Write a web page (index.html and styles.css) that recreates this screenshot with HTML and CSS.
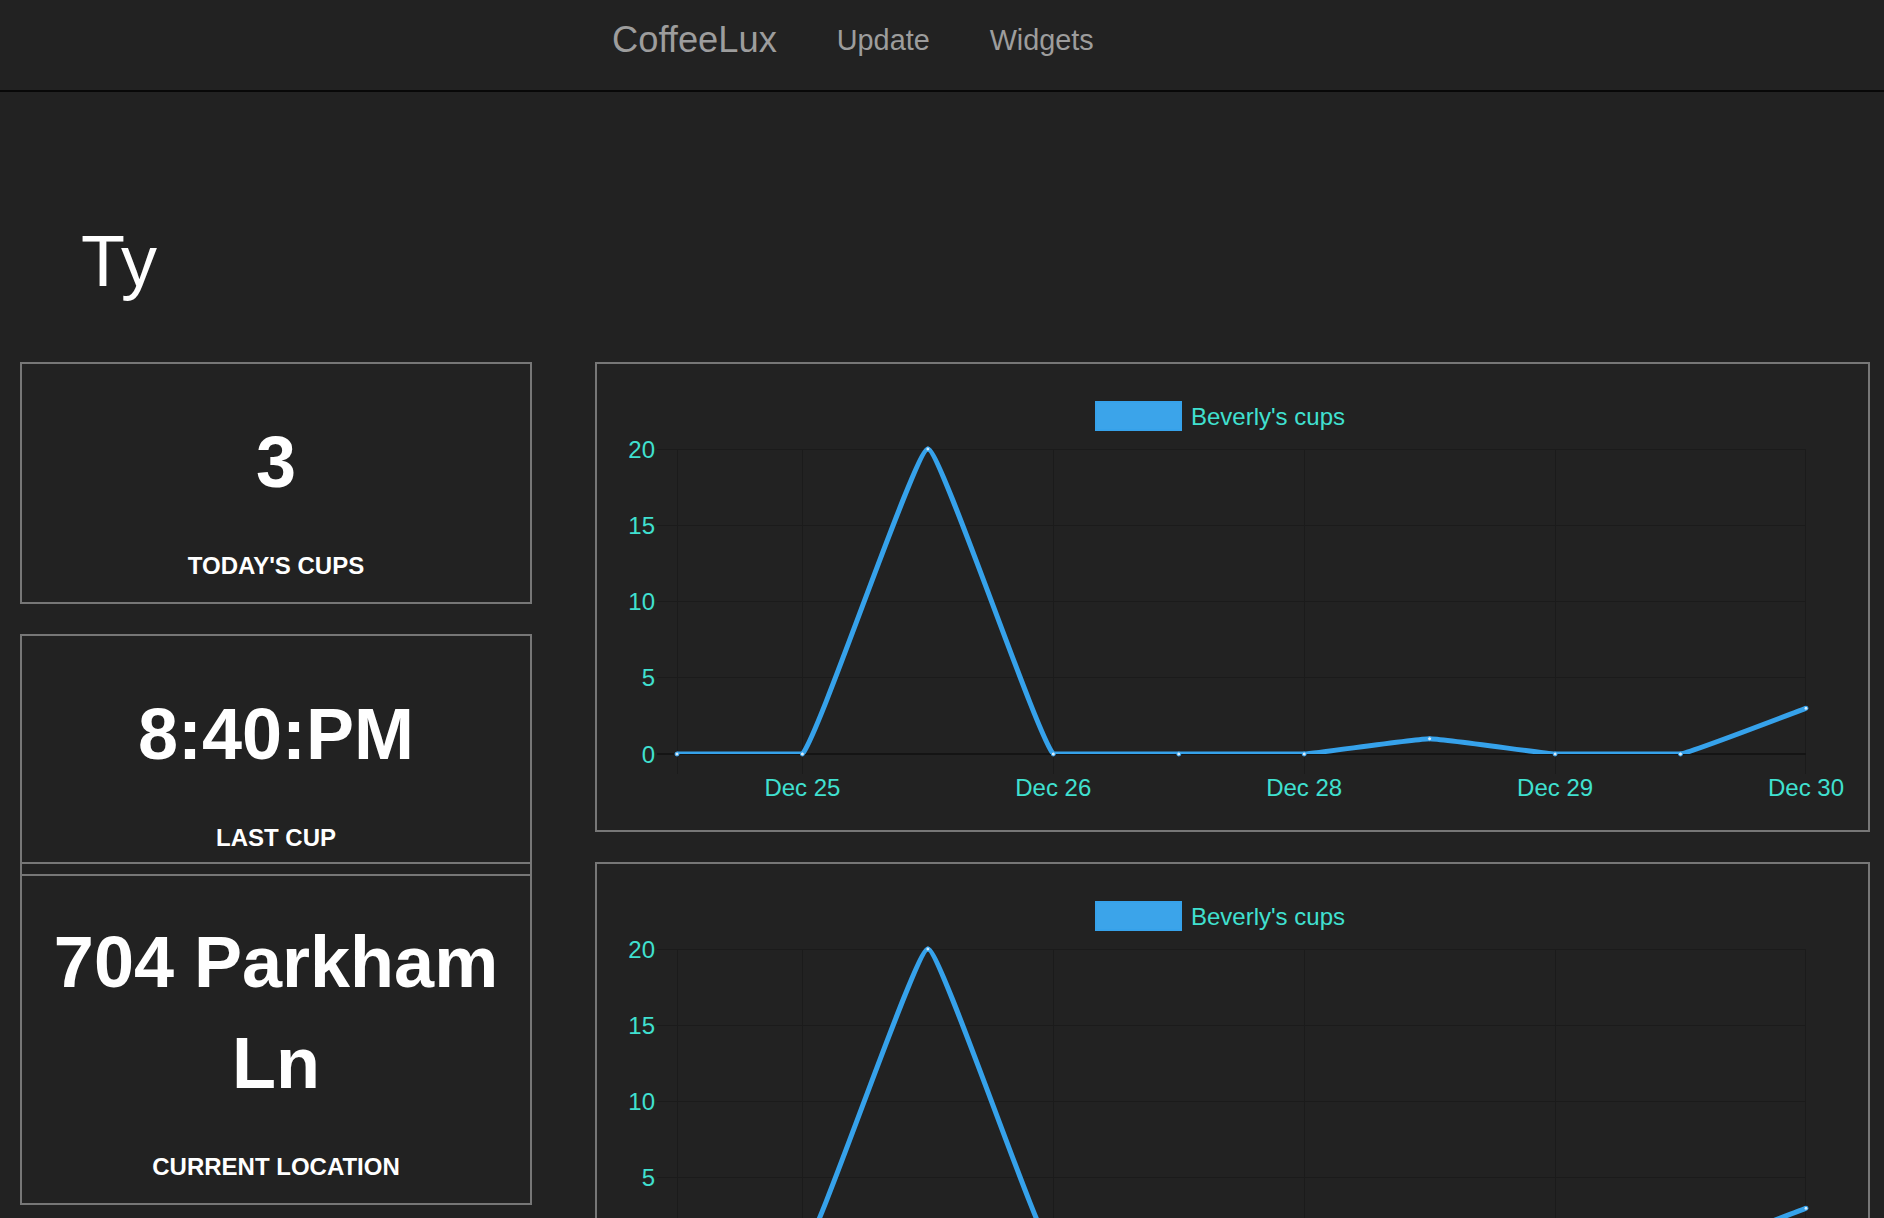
FILE: index.html
```html
<!DOCTYPE html>
<html lang="en">
<head>
<meta charset="utf-8">
<title>CoffeeLux</title>
<link rel="stylesheet" href="styles.css">
</head>
<body>
<nav class="navbar">
  <div class="nav-inner">
    <a class="brand" href="#">CoffeeLux</a>
    <ul class="nav-links">
      <li><a href="#">Update</a></li>
      <li><a href="#">Widgets</a></li>
    </ul>
  </div>
</nav>
<main class="page">
  <h1 class="title">Ty</h1>
  <div class="dash">
    <div class="stats stats-top">
      <div class="card">
        <div class="num">3</div>
        <div class="lbl">TODAY'S CUPS</div>
      </div>
      <div class="card">
        <div class="num">8:40:PM</div>
        <div class="lbl">LAST CUP</div>
      </div>
    </div>
    <div class="chart-box">
      <svg class="chart" viewBox="597 364 1271 466" width="1271" height="466">
        <defs><clipPath id="area1"><rect x="677" y="440" width="1129" height="314"/></clipPath></defs>
        <rect class="legend-box" x="1096" y="402" width="85" height="28"/>
        <text class="legend-text" x="1191" y="424.5">Beverly's cups</text>
        <g class="grid">
          <line x1="657" y1="449.5" x2="1806" y2="449.5"/>
          <line x1="657" y1="525.5" x2="1806" y2="525.5"/>
          <line x1="657" y1="601.5" x2="1806" y2="601.5"/>
          <line x1="657" y1="677.5" x2="1806" y2="677.5"/>
          <line x1="677.5" y1="449" x2="677.5" y2="774"/>
          <line x1="802.5" y1="449" x2="802.5" y2="774"/>
          <line x1="1053.5" y1="449" x2="1053.5" y2="774"/>
          <line x1="1304.5" y1="449" x2="1304.5" y2="774"/>
          <line x1="1555.5" y1="449" x2="1555.5" y2="774"/>
          <line x1="1805.5" y1="449" x2="1805.5" y2="774"/>
        </g>
        <line class="zero" x1="657" y1="754" x2="1806" y2="754"/>
        <g class="tick ytick">
          <text x="655" y="457.6">20</text>
          <text x="655" y="533.8">15</text>
          <text x="655" y="610.1">10</text>
          <text x="655" y="686.3">5</text>
          <text x="655" y="762.6">0</text>
        </g>
        <g class="tick xtick">
          <text x="802.4" y="795.6">Dec 25</text>
          <text x="1053.3" y="795.6">Dec 26</text>
          <text x="1304.2" y="795.6">Dec 28</text>
          <text x="1555.1" y="795.6">Dec 29</text>
          <text x="1806" y="795.6">Dec 30</text>
        </g>
        <path class="series" clip-path="url(#area1)" d="M677 754 C689.5 754 795.5 754 802.4 754 C820.6 731.9 915.4 449 927.9 449 C940.4 449 1035.1 731.9 1053.3 754 C1060.2 754 1166.3 754 1178.8 754 C1191.3 754 1291.7 754 1304.2 754 C1316.8 753.2 1417.1 738.75 1429.6 738.75 C1442.1 738.75 1542.5 753.2 1555.1 754 C1567.6 754 1668.3 754 1680.5 754 C1693.5 751.6 1793.5 712.8 1806 708.25"/>
        <g class="pts">
          <circle cx="677" cy="754" r="2"/>
          <circle cx="802.4" cy="754" r="2"/>
          <circle cx="927.9" cy="449" r="2"/>
          <circle cx="1053.3" cy="754" r="2"/>
          <circle cx="1178.8" cy="754" r="2"/>
          <circle cx="1304.2" cy="754" r="2"/>
          <circle cx="1429.6" cy="738.75" r="2"/>
          <circle cx="1555.1" cy="754" r="2"/>
          <circle cx="1680.5" cy="754" r="2"/>
          <circle cx="1806" cy="708.25" r="2"/>
        </g>
      </svg>
    </div>
    <div class="stats">
      <div class="card">
        <div class="num">704 Parkham Ln</div>
        <div class="lbl">CURRENT LOCATION</div>
      </div>
    </div>
    <div class="chart-box">
      <svg class="chart" viewBox="597 364 1271 466" width="1271" height="466">
        <defs><clipPath id="area2"><rect x="677" y="440" width="1129" height="314"/></clipPath></defs>
        <rect class="legend-box" x="1096" y="402" width="85" height="28"/>
        <text class="legend-text" x="1191" y="424.5">Beverly's cups</text>
        <g class="grid">
          <line x1="657" y1="449.5" x2="1806" y2="449.5"/>
          <line x1="657" y1="525.5" x2="1806" y2="525.5"/>
          <line x1="657" y1="601.5" x2="1806" y2="601.5"/>
          <line x1="657" y1="677.5" x2="1806" y2="677.5"/>
          <line x1="677.5" y1="449" x2="677.5" y2="774"/>
          <line x1="802.5" y1="449" x2="802.5" y2="774"/>
          <line x1="1053.5" y1="449" x2="1053.5" y2="774"/>
          <line x1="1304.5" y1="449" x2="1304.5" y2="774"/>
          <line x1="1555.5" y1="449" x2="1555.5" y2="774"/>
          <line x1="1805.5" y1="449" x2="1805.5" y2="774"/>
        </g>
        <line class="zero" x1="657" y1="754" x2="1806" y2="754"/>
        <g class="tick ytick">
          <text x="655" y="457.6">20</text>
          <text x="655" y="533.8">15</text>
          <text x="655" y="610.1">10</text>
          <text x="655" y="686.3">5</text>
          <text x="655" y="762.6">0</text>
        </g>
        <g class="tick xtick">
          <text x="802.4" y="795.6">Dec 25</text>
          <text x="1053.3" y="795.6">Dec 26</text>
          <text x="1304.2" y="795.6">Dec 28</text>
          <text x="1555.1" y="795.6">Dec 29</text>
          <text x="1806" y="795.6">Dec 30</text>
        </g>
        <path class="series" clip-path="url(#area2)" d="M677 754 C689.5 754 795.5 754 802.4 754 C820.6 731.9 915.4 449 927.9 449 C940.4 449 1035.1 731.9 1053.3 754 C1060.2 754 1166.3 754 1178.8 754 C1191.3 754 1291.7 754 1304.2 754 C1316.8 753.2 1417.1 738.75 1429.6 738.75 C1442.1 738.75 1542.5 753.2 1555.1 754 C1567.6 754 1668.3 754 1680.5 754 C1693.5 751.6 1793.5 712.8 1806 708.25"/>
        <g class="pts">
          <circle cx="677" cy="754" r="2"/>
          <circle cx="802.4" cy="754" r="2"/>
          <circle cx="927.9" cy="449" r="2"/>
          <circle cx="1053.3" cy="754" r="2"/>
          <circle cx="1178.8" cy="754" r="2"/>
          <circle cx="1304.2" cy="754" r="2"/>
          <circle cx="1429.6" cy="738.75" r="2"/>
          <circle cx="1555.1" cy="754" r="2"/>
          <circle cx="1680.5" cy="754" r="2"/>
          <circle cx="1806" cy="708.25" r="2"/>
        </g>
      </svg>
    </div>
  </div>
</main>
</body>
</html>
```
FILE: styles.css
```css
html, body {
  margin: 0;
  padding: 0;
  background: #222222;
}

body {
  font-family: "Liberation Sans", Arial, Helvetica, sans-serif;
  color: #ffffff;
}

a {
  text-decoration: none;
}

/* ---------- navbar ---------- */
.navbar {
  height: 90px;
  background: #222222;
  border-bottom: 2px solid #080808;
}

.nav-inner {
  display: flex;
  align-items: flex-start;
  padding-left: 582px;
}

.brand {
  display: block;
  padding: 0 30px;
  font-size: 36.3px;
  line-height: 80px;
  color: #9d9d9d;
}

.nav-links {
  display: flex;
  list-style: none;
  margin: 0;
  padding: 0;
}

.nav-links a {
  display: block;
  padding: 0 30px;
  font-size: 28.8px;
  line-height: 80px;
  color: #9d9d9d;
}

/* ---------- page ---------- */
.page {
  padding: 0 0 0 20px;
}

.title {
  margin: 129px 0 61px 61px;
  font-size: 72px;
  font-weight: normal;
  line-height: 80px;
  color: #ffffff;
}

.dash {
  display: grid;
  grid-template-columns: 512px 1275px;
  grid-template-rows: 470px auto;
  column-gap: 63px;
  row-gap: 30px;
}

.stats {
  display: flex;
  flex-direction: column;
  gap: 30px;
  align-self: start;
}

.stats-top {
  height: 470px;
}

.card {
  flex-shrink: 0;
  box-sizing: border-box;
  border: 2px solid #777777;
  padding: 48px 10px 20px;
  text-align: center;
}

.num {
  font-size: 72px;
  line-height: 101px;
  font-weight: bold;
  color: #ffffff;
}

.lbl {
  margin-top: 36px;
  font-size: 24px;
  line-height: 33px;
  font-weight: bold;
  color: #ffffff;
}

/* ---------- charts ---------- */
.chart-box {
  box-sizing: border-box;
  height: 470px;
  border: 2px solid #777777;
}

.chart {
  display: block;
  width: 1271px;
  height: 466px;
}

.legend-box {
  fill: #3ba4ea;
  stroke: #36a2eb;
  stroke-width: 2;
}

.legend-text,
.tick text {
  fill: #40e0d0;
  font-family: "Liberation Sans", Arial, Helvetica, sans-serif;
  font-size: 24px;
}

.ytick text {
  text-anchor: end;
}

.xtick text {
  text-anchor: middle;
}

.grid line {
  stroke: #1b1b1b;
  stroke-width: 1;
}

.zero {
  stroke: #141414;
  stroke-width: 2;
}

.series {
  fill: none;
  stroke: #36a2eb;
  stroke-width: 5;
  stroke-linejoin: round;
  stroke-linecap: round;
}

.pts circle {
  fill: #d8ecfb;
  stroke: #36a2eb;
  stroke-width: 1;
}
```
